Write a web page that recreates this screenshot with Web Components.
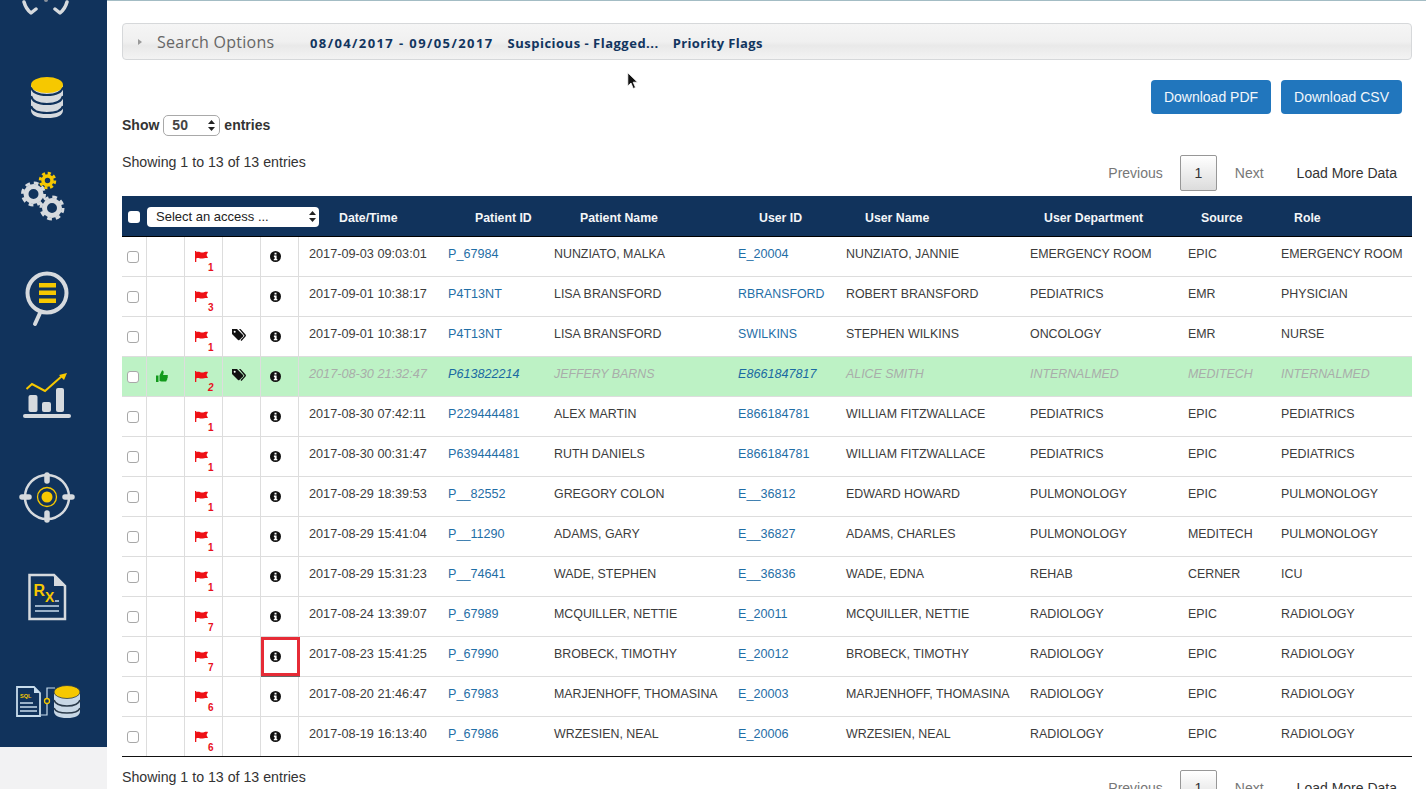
<!DOCTYPE html>
<html>
<head>
<meta charset="utf-8">
<title>Access log</title>
<style>
  html, body { margin: 0; height: 100%; overflow: hidden; background: #fff; }
  body { font-family: "Liberation Sans", Arial, sans-serif; }
</style>
</head>
<body>
<app-page>
  <side-nav slot="nav"></side-nav>
  <search-panel>
    <span style="letter-spacing:1.4px">08/04/2017 - 09/05/2017</span>
    <span style="letter-spacing:.5px">Suspicious - Flagged...</span>
    <span style="letter-spacing:.35px">Priority Flags</span>
  </search-panel>
  <table-toolbar>
    <ui-button>Download PDF</ui-button>
    <ui-button style="width:121px">Download CSV</ui-button>
  </table-toolbar>
  <access-table id="log"></access-table>
  <table-footer></table-footer>
</app-page>

<script>
const GRID = '25px 38px 38px 38px 38px 139px 106px 184px 108px 184px 158px 93px 141px'

const ARROWS = `<svg width="7" height="11" viewBox="0 0 7 11"><path d="M3.5 0 7 4H0zM3.5 11 0 7h7z" fill="#222"/></svg>`

function gear(cx, cy, r, color, w) {
  return `<circle cx="${cx}" cy="${cy}" r="${r}" fill="none" stroke="${color}" stroke-width="${w}"/>
    <circle cx="${cx}" cy="${cy}" r="${r + w / 2 + 1}" fill="none" stroke="${color}" stroke-width="3"
      stroke-dasharray="${(r + w / 2 + 1) * 0.785 * 0.55} ${(r + w / 2 + 1) * 0.785 * 0.45}"/>`
}

const GRAY = '#d6dade'
const YEL = '#f6c800'
const NAVY = '#11335c'

const NAV_ICONS = [
  { box: '0 0 107 47', h: 47, svg: `
    <path d="M24 2Q26 9 31 13L36 9M55 9L60 13Q65 9 67 2" fill="none" stroke="${GRAY}" stroke-width="3.5" stroke-linecap="round" stroke-linejoin="round"/>
    <circle cx="46" cy="0" r="2" fill="#8a929c"/>` },
  { box: '0 47 107 100', h: 100, svg: `
    <path d="M31 85V110Q31 118 47 118T63 110V85z" fill="${GRAY}"/>
    <path d="M31 96Q33 104 47 104T63 96M31 106Q33 113 47 113T63 106" fill="none" stroke="${NAVY}" stroke-width="2.2"/>
    <path d="M31 87Q33 95 47 95T63 87" fill="none" stroke="${NAVY}" stroke-width="2.2"/>
    <ellipse cx="47" cy="85" rx="16" ry="8" fill="${YEL}"/>` },
  { box: '0 147 107 100', h: 100, svg: `
    ${gear(33.5, 194, 7.5, GRAY, 5)}
    ${gear(52, 208, 7.5, GRAY, 5)}
    ${gear(47.5, 180.5, 4.5, YEL, 3.5)}` },
  { box: '0 247 107 100', h: 100, svg: `
    <circle cx="47" cy="293" r="19.5" fill="none" stroke="${GRAY}" stroke-width="4"/>
    <path d="M40 313L35 324" stroke="${GRAY}" stroke-width="4" stroke-linecap="round"/>
    <path d="M39 283h17v4.5H39zM39 290.5h17v4.5H39zM39 298.5h17v4.5H39z" fill="${YEL}"/>` },
  { box: '0 347 107 100', h: 100, svg: `
    <rect x="23" y="414" width="48" height="4" rx="2" fill="${GRAY}"/>
    <rect x="28.500" y="395" width="9" height="17" rx="2" fill="${GRAY}"/>
    <rect x="42" y="402" width="9" height="10" rx="2" fill="${GRAY}"/>
    <rect x="56" y="388" width="8" height="24" rx="2" fill="${GRAY}"/>
    <path d="M26.500 389L32 384L45 391L62 376" fill="none" stroke="${YEL}" stroke-width="2"/>
    <path d="M67 373L59 375L64 380z" fill="${YEL}"/>` },
  { box: '0 447 107 100', h: 100, svg: `
    <circle cx="47" cy="497" r="22" fill="none" stroke="${GRAY}" stroke-width="2.500"/>
    <path d="M47 475V481M47 513V520M22 497H29M65 497H72" stroke="${GRAY}" stroke-width="5.500" stroke-linecap="round"/>
    <circle cx="47" cy="497" r="9.500" fill="none" stroke="${YEL}" stroke-width="1.300"/>
    <circle cx="47" cy="497" r="5.500" fill="${YEL}"/>` },
  { box: '0 547 107 100', h: 100, svg: `
    <path d="M29.500 575H54L65 586V619H29.500z" fill="none" stroke="${GRAY}" stroke-width="2.500"/>
    <path d="M54 575V586H65z" fill="${GRAY}"/>
    <text x="33.500" y="596" font-family="Liberation Sans" font-weight="700" font-size="16" fill="${YEL}">R</text>
    <text x="45" y="602" font-family="Liberation Sans" font-weight="700" font-size="14" fill="${YEL}">X</text>
    <path d="M55 601h4M35 606h24M35 611h24" stroke="#c8dcec" stroke-width="1.500"/>` },
  { box: '0 647 107 100', h: 100, svg: `
    <path d="M17 687H34L40 693V716H17z" fill="none" stroke="#c8dcec" stroke-width="1.800"/>
    <path d="M34 687V693H40z" fill="#c8dcec"/>
    <text x="20" y="698" font-family="Liberation Sans" font-weight="700" font-size="5.500" fill="${YEL}">SQL</text>
    <path d="M20 703h13M20 707h17M20 711h17" stroke="#c8dcec" stroke-width="1.500"/>
    <path d="M41 715H47V688H55" fill="none" stroke="#c8dcec" stroke-width="1.200"/>
    <circle cx="47" cy="701" r="2.500" fill="${NAVY}" stroke="${YEL}" stroke-width="1.300"/>
    <path d="M54 693V711Q54 718 67 718T80 711V693z" fill="#c8d8e6"/>
    <path d="M54 700Q56 706 67 706T80 700M54 708Q56 713 67 713T80 708" fill="none" stroke="#2a3a4a" stroke-width="1.600"/>
    <ellipse cx="67" cy="692" rx="13" ry="6.500" fill="${YEL}" stroke="#2a3a4a" stroke-width="0.800"/>` }
]

customElements.define('app-page', class extends HTMLElement {
  constructor() {
    super()
    this.attachShadow({ mode: 'open' }).innerHTML = `
<style>
  :host { display: flex; height: 789px; overflow: hidden; background: #fff; }
  .left { width: 107px; flex: none; background: #f2f2f3; }
  .main { flex: 1; min-width: 0; border-top: 1px solid #a3bcc4; padding: 22px 14px 0 15px; }
</style>
<div class="left"><slot name="nav"></slot></div>
<div class="main"><slot></slot></div>`
  }
})

customElements.define('side-nav', class extends HTMLElement {
  constructor() {
    super()
    const items = NAV_ICONS.map(i =>
      `<svg width="107" height="${i.h}" viewBox="${i.box}">${i.svg}</svg>`).join('')
    this.attachShadow({ mode: 'open' }).innerHTML = `
<style>
  :host { display: flex; flex-direction: column; height: 747px; background: ${NAVY}; overflow: hidden; }
  svg { display: block; flex: none; }
</style>${items}`
  }
})

customElements.define('search-panel', class extends HTMLElement {
  constructor() {
    super()
    this.attachShadow({ mode: 'open' }).innerHTML = `
<style>
  :host {
    display: flex; align-items: center; height: 35px;
    border: 1px solid #d6d8da; border-radius: 4px;
    background: linear-gradient(#f5f5f5 0, #f0f0f0 50%, #e9e9e9 62%, #f3f3f3 100%);
    font-family: "Open Sans", sans-serif;
  }
  .arrow { width: 0; height: 0; margin-left: 15px; border-left: 4px solid #9a9a9a; border-top: 3.5px solid transparent; border-bottom: 3.5px solid transparent; }
  .title { margin-left: 15px; width: 153px; font-size: 16px; letter-spacing: .25px; color: #666; }
  .filters { display: flex; gap: 14px; font-weight: 700; font-size: 13px; color: #12355f; padding-top: 3px; }
</style>
<span class="arrow"></span>
<span class="title">Search Options</span>
<div class="filters"><slot></slot></div>`
  }
})

customElements.define('ui-button', class extends HTMLElement {
  constructor() {
    super()
    this.attachShadow({ mode: 'open' }).innerHTML = `
<style>
  :host {
    display: flex; align-items: center; justify-content: center;
    width: 120px; height: 34px; border-radius: 4px;
    background: #2176bd; color: #f2f7fb; font-size: 14px;
  }
</style>
<slot></slot>`
  }
})

customElements.define('pager-bar', class extends HTMLElement {
  constructor() {
    super()
    this.attachShadow({ mode: 'open' }).innerHTML = `
<style>
  :host { display: flex; align-items: center; height: 36px; font-size: 14px; color: #777; }
  .cur {
    box-sizing: border-box; width: 37px; height: 36px; margin: 0 18px 0 17px;
    display: flex; align-items: center; justify-content: center;
    border: 1px solid #979797; border-radius: 2px;
    background: linear-gradient(#fff, #dcdcdc); color: #333;
  }
  .more { margin: 0 15px 0 33px; color: #333; }
</style>
<span>Previous</span><span class="cur">1</span><span>Next</span><span class="more">Load More Data</span>`
  }
})

customElements.define('table-toolbar', class extends HTMLElement {
  constructor() {
    super()
    this.attachShadow({ mode: 'open' }).innerHTML = `
<style>
  :host { display: flex; justify-content: space-between; height: 136px; color: #333; font-size: 14px; }
  .l { padding-top: 54px; }
  .show { display: flex; align-items: center; gap: 4px; height: 22px; font-weight: 700; }
  .sel {
    box-sizing: border-box; width: 57px; height: 21px; padding: 0 4px 0 8px;
    display: flex; align-items: center; justify-content: space-between;
    border: 1px solid #a9a9a9; border-radius: 5px; background: #fff;
    font-weight: 700; font-size: 14px; color: #444;
  }
  .info { margin-top: 18px; line-height: 16px; font-size: 14.200px; }
  .r { padding-top: 20px; display: flex; flex-direction: column; align-items: flex-end; gap: 41px; }
  .btns { display: flex; gap: 10px; margin-right: 10px; }
</style>
<div class="l">
  <div class="show">Show <span class="sel">50 ${ARROWS}</span> entries</div>
  <div class="info">Showing 1 to 13 of 13 entries</div>
</div>
<div class="r">
  <div class="btns"><slot></slot></div>
  <pager-bar></pager-bar>
</div>`
  }
})

customElements.define('access-table', class extends HTMLElement {
  constructor() {
    super()
    this.attachShadow({ mode: 'open' }).innerHTML = `
<style>
  :host { display: block; }
  .head {
    display: grid; grid-template-columns: 25px 177px 151px 105px 179px 106px 179px 157px 93px 1fr;
    height: 40px; align-items: center; background: ${NAVY};
    border-bottom: 1px solid #000;
    color: #f4f6f8; font-weight: 700; font-size: 12.300px;
  }
  .head span { padding-top: 3px; }
  .all { width: 12px; height: 12px; margin-left: 6px; margin-top: 1px; background: #fff; border-radius: 3px; }
  .sel {
    box-sizing: border-box; width: 172px; height: 20px; padding: 0 3.500px 0 9px; margin-top: 1px;
    display: flex; align-items: center; justify-content: space-between;
    background: #fff; border-radius: 4px; color: #222; font-weight: 400; font-size: 13px;
  }
  .d { margin-left: 15px; }
</style>
<div class="head">
  <div class="all"></div>
  <div class="sel">Select an access ... ${ARROWS}</div>
  <span class="d">Date/Time</span><span>Patient ID</span><span>Patient Name</span><span>User ID</span>
  <span>User Name</span><span>User Department</span><span>Source</span><span>Role</span>
</div>
<slot></slot>`
  }
})

customElements.define('access-row', class extends HTMLElement {
  constructor() {
    super()
    this.attachShadow({ mode: 'open' })
  }

  /**
   * @param {Object} r row data
   */
  set data(r) {
    if (r.ok) this.setAttribute('ok', '')
    if (r.picked) this.setAttribute('picked', '')
    const thumb = r.ok ? `<svg class="ic" style="margin-top:13px" width="12" height="12" viewBox="0 0 12 12"><path d="M0 5.500h2.500V12H0zM3.500 5.500 6 .5c1.500 0 2 1 1.500 3L7 5h4c1 0 1.200 1.300.5 1.700.5.700.3 1.500-.3 1.800.3.700 0 1.400-.6 1.600.2.900-.3 1.400-1.100 1.400H5.500L3.500 11z" fill="#129a1c"/></svg>` : ''
    const tag = r.tag ? `<svg class="ic" style="margin-top:12px" width="14" height="13" viewBox="0 0 14 13"><path d="M0 0h5l6 6a1 1 0 0 1 0 1.400L7.400 11a1 1 0 0 1-1.400 0L0 5z" fill="#111"/><path d="M7 0h1.500l5 5.500a1.500 1.500 0 0 1 0 2L9.500 12 8.500 11l4-4.300L7 0z" fill="#111"/><circle cx="2.700" cy="2.700" r="1" fill="#fff"/></svg>` : ''
    const linkSize = /^[A-Z]+$/.test(r.u) ? 12.35 : 12.6
    this.shadowRoot.innerHTML = `
<style>
  :host { display: grid; grid-template-columns: ${GRID}; box-sizing: border-box; height: 40px; border-bottom: 1px solid #ddd; font-size: 12.400px; color: #3c3c3c; }
  :host(:last-child) { border-bottom-color: #111; }
  :host([ok]) { background: #bdf2c5; color: #a9adaa; font-style: italic; }
  .c { box-sizing: border-box; border-right: 1px solid #ddd; padding-left: 9px; }
  .cb { padding-left: 0; }
  .cb i { display: block; box-sizing: border-box; width: 12px; height: 12px; margin: 14px 0 0 5px; border: 1px solid #a8a8a8; border-radius: 3px; background: #fff; }
  .ic { display: block; }
  .fl { padding-left: 10px; }
  .fl svg { display: block; margin-top: 14px; }
  .fl b { display: block; margin: 1px 0 0 13px; color: #e8101c; font-size: 10px; line-height: 10px; }
  .inf svg { display: block; margin: 14px 0 0 0; }
  :host([picked]) .inf { border: 3px solid #e62b36; box-shadow: 0 1px 0 #666; padding-left: 6px; margin-right: -1px; height: 39px; background: #fff; }
  :host([picked]) .inf svg { margin-top: 11px; }
  .t { padding: 9px 0 0 10px; line-height: 17px; white-space: nowrap; }
  .num { font-size: 12.700px; }
  a { color: #1f6ea6; text-decoration: none; font-size: 12.600px; }
  :host([ok]) a { color: #1a6aa2; }
</style>
<div class="c cb"><i></i></div>
<div class="c">${thumb}</div>
<div class="c fl"><svg width="13" height="11" viewBox="0 0 13 11"><path d="M0 0h1.300v11H0zM1.300 1.200C4 -.4 6 2.200 9 1.200c1.500-.4 3-.4 4-.2L11.500 4 13 7c-3-.6-5 1.200-8 .4-1.500-.4-2.700-.4-3.700 0z" fill="#ee1116"/></svg><b>${r.n}</b></div>
<div class="c">${tag}</div>
<div class="c inf"><svg width="11" height="11" viewBox="0 0 11 11"><circle cx="5.500" cy="5.500" r="5.500" fill="#111"/><path d="M4.500 1.800h2v1.700h-2zM3.900 4.600h2.700v3.300h.7v1.300H3.800V7.900h.8V5.900h-.7z" fill="#fff"/></svg></div>
<div class="t num">${r.d}</div>
<div class="t"><a>${r.p}</a></div>
<div class="t">${r.pn}</div>
<div class="t"><a style="font-size:${linkSize}px">${r.u}</a></div>
<div class="t">${r.un}</div>
<div class="t">${r.dep}</div>
<div class="t">${r.src}</div>
<div class="t">${r.role}</div>`
  }
})

customElements.define('table-footer', class extends HTMLElement {
  constructor() {
    super()
    this.attachShadow({ mode: 'open' }).innerHTML = `
<style>
  :host { display: flex; justify-content: space-between; font-size: 14.200px; color: #333; }
  .info { margin-top: 12px; line-height: 16px; }
  pager-bar { margin-top: 13px; }
</style>
<div class="info">Showing 1 to 13 of 13 entries</div>
<pager-bar></pager-bar>`
  }
})

const ROWS = [
  ['2017-09-03 09:03:01', 'P_67984', 'NUNZIATO, MALKA', 'E_20004', 'NUNZIATO, JANNIE', 'EMERGENCY ROOM', 'EPIC', 'EMERGENCY ROOM', 1],
  ['2017-09-01 10:38:17', 'P4T13NT', 'LISA BRANSFORD', 'RBRANSFORD', 'ROBERT BRANSFORD', 'PEDIATRICS', 'EMR', 'PHYSICIAN', 3],
  ['2017-09-01 10:38:17', 'P4T13NT', 'LISA BRANSFORD', 'SWILKINS', 'STEPHEN WILKINS', 'ONCOLOGY', 'EMR', 'NURSE', 1, { tag: true }],
  ['2017-08-30 21:32:47', 'P613822214', 'JEFFERY BARNS', 'E8661847817', 'ALICE SMITH', 'INTERNALMED', 'MEDITECH', 'INTERNALMED', 2, { tag: true, ok: true }],
  ['2017-08-30 07:42:11', 'P229444481', 'ALEX MARTIN', 'E866184781', 'WILLIAM FITZWALLACE', 'PEDIATRICS', 'EPIC', 'PEDIATRICS', 1],
  ['2017-08-30 00:31:47', 'P639444481', 'RUTH DANIELS', 'E866184781', 'WILLIAM FITZWALLACE', 'PEDIATRICS', 'EPIC', 'PEDIATRICS', 1],
  ['2017-08-29 18:39:53', 'P__82552', 'GREGORY COLON', 'E__36812', 'EDWARD HOWARD', 'PULMONOLOGY', 'EPIC', 'PULMONOLOGY', 1],
  ['2017-08-29 15:41:04', 'P__11290', 'ADAMS, GARY', 'E__36827', 'ADAMS, CHARLES', 'PULMONOLOGY', 'MEDITECH', 'PULMONOLOGY', 1],
  ['2017-08-29 15:31:23', 'P__74641', 'WADE, STEPHEN', 'E__36836', 'WADE, EDNA', 'REHAB', 'CERNER', 'ICU', 1],
  ['2017-08-24 13:39:07', 'P_67989', 'MCQUILLER, NETTIE', 'E_20011', 'MCQUILLER, NETTIE', 'RADIOLOGY', 'EPIC', 'RADIOLOGY', 7],
  ['2017-08-23 15:41:25', 'P_67990', 'BROBECK, TIMOTHY', 'E_20012', 'BROBECK, TIMOTHY', 'RADIOLOGY', 'EPIC', 'RADIOLOGY', 7, { picked: true }],
  ['2017-08-20 21:46:47', 'P_67983', 'MARJENHOFF, THOMASINA', 'E_20003', 'MARJENHOFF, THOMASINA', 'RADIOLOGY', 'EPIC', 'RADIOLOGY', 6],
  ['2017-08-19 16:13:40', 'P_67986', 'WRZESIEN, NEAL', 'E_20006', 'WRZESIEN, NEAL', 'RADIOLOGY', 'EPIC', 'RADIOLOGY', 6]
]

const log = document.getElementById('log')
ROWS.forEach(r => {
  const row = document.createElement('access-row')
  log.appendChild(row)
  row.data = { d: r[0], p: r[1], pn: r[2], u: r[3], un: r[4], dep: r[5], src: r[6], role: r[7], n: r[8], ...(r[9] || {}) }
})

// mouse pointer caught in the screenshot
customElements.define('mouse-pointer', class extends HTMLElement {
  constructor() {
    super()
    this.attachShadow({ mode: 'open' }).innerHTML = `
<style>:host { position: absolute; left: 627px; top: 72px; width: 12px; height: 19px; }</style>
<svg width="12" height="19" viewBox="0 0 12 19"><path d="M.8.8V14l3.200-3 2.200 5.500 2.300-1-2.300-5.300h4.300z" fill="#111" stroke="#fff" stroke-width=".8"/></svg>`
  }
})
document.body.appendChild(document.createElement('mouse-pointer'))
</script>
</body>
</html>
